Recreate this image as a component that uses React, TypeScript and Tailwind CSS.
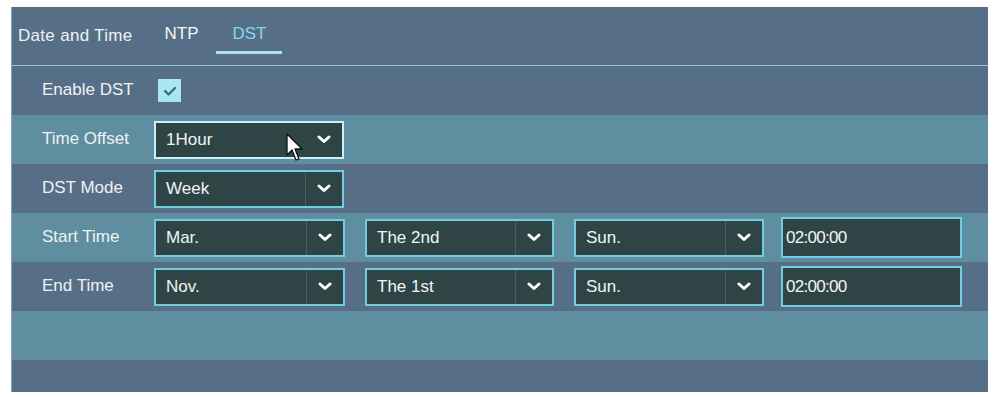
import React from "react";

const font = { fontFamily: '"Liberation Sans", Arial, sans-serif' };

function Chevron() {
  return (
    <svg width="14" height="9" viewBox="0 0 14 9">
      <polyline points="2,2 7,6.5 12,2" fill="none" stroke="#ffffff" strokeWidth="3" strokeLinecap="round" strokeLinejoin="round" />
    </svg>
  );
}

function Select({ value, w, sep = true, hover = false }: { value: string; w: string; sep?: boolean; hover?: boolean }) {
  return (
    <div
      className={`${w} h-[38px] flex items-stretch bg-[#2f4545] border-2 ${hover ? "border-[#c8f0f8]" : "border-[#72cde3]"}`}
    >
      <div className="flex-1 flex items-center pl-[10px] text-[17px] text-[#f2f5f5]">{value}</div>
      <div className={`w-[37px] flex items-center justify-center ${sep ? "border-l border-[#3f6361]" : ""}`}>
        <Chevron />
      </div>
    </div>
  );
}

function Row({ label, alt, children }: { label: string; alt?: boolean; children?: React.ReactNode }) {
  return (
    <div className={`h-[49px] flex items-center ${alt ? "bg-[#5e8e9f]" : ""}`}>
      <div className="w-[142px] pl-[30px] text-[17px] text-[#eef2f4] -mt-[2px]">{label}</div>
      {children}
    </div>
  );
}

function TimeBox({ value }: { value: string }) {
  return (
    <div className="ml-[17px] w-[181px] h-[41px] bg-[#2f4545] border-2 border-[#72cde3] flex items-center pl-[3px] text-[17px] text-[#f2f5f5] tracking-[-0.7px]">
      {value}
    </div>
  );
}

export default function App() {
  return (
    <div className="w-[995px] h-[397px] bg-white pt-[7px] pl-[11px]" style={font}>
      <div className="relative w-[977px] h-[385px] bg-[#566f87] border-l border-[#8a9aa8] flex flex-col">
        <div className="h-[59px] flex items-center border-b border-[#8ec5d9] shrink-0">
          <div className="pl-[6px] text-[17px] text-[#eef2f4] tracking-[0.3px]">Date and Time</div>
          <div className="ml-[32px] text-[17px] text-[#f2f5f7] -mt-[4px]">NTP</div>
          <div className="ml-[18px] relative h-full flex items-center px-[16px]">
            <span className="text-[17px] text-[#83d8ee] -mt-[4px]">DST</span>
            <div className="absolute left-0 right-0 top-[44px] h-[3px] bg-[#a9e3f1]" />
          </div>
        </div>
        <Row label="Enable DST">
          <div className="ml-[4px] w-[23px] h-[23px] bg-[#a8e6f3] flex items-center justify-center">
            <svg width="16" height="12" viewBox="0 0 16 12">
              <polyline points="3,6 6.5,9.5 13,3" fill="none" stroke="#2b6f79" strokeWidth="2.2" strokeLinecap="round" strokeLinejoin="round" />
            </svg>
          </div>
        </Row>
        <Row label="Time Offset" alt>
          <Select value="1Hour" w="w-[190px]" sep={false} hover />
        </Row>
        <Row label="DST Mode">
          <Select value="Week" w="w-[190px]" />
        </Row>
        <Row label="Start Time" alt>
          <div className="flex items-center">
            <Select value="Mar." w="w-[191px]" />
            <div className="ml-[20px]"><Select value="The 2nd" w="w-[189px]" /></div>
            <div className="ml-[20px]"><Select value="Sun." w="w-[190px]" /></div>
            <TimeBox value="02:00:00" />
          </div>
        </Row>
        <Row label="End Time">
          <div className="flex items-center">
            <Select value="Nov." w="w-[191px]" />
            <div className="ml-[20px]"><Select value="The 1st" w="w-[189px]" /></div>
            <div className="ml-[20px]"><Select value="Sun." w="w-[190px]" /></div>
            <TimeBox value="02:00:00" />
          </div>
        </Row>
        <div className="h-[49px] bg-[#5e8e9f] shrink-0" />
        <div className="flex-1" />
        <svg className="absolute left-[274px] top-[126px]" width="20" height="30" viewBox="0 0 20 30">
          <path d="M1,1 L1,22 L6,17 L10,27 L13,26 L9,16 L16,16 Z" fill="#ffffff" stroke="#111111" strokeWidth="1.3" strokeLinejoin="round" />
        </svg>
      </div>
    </div>
  );
}
